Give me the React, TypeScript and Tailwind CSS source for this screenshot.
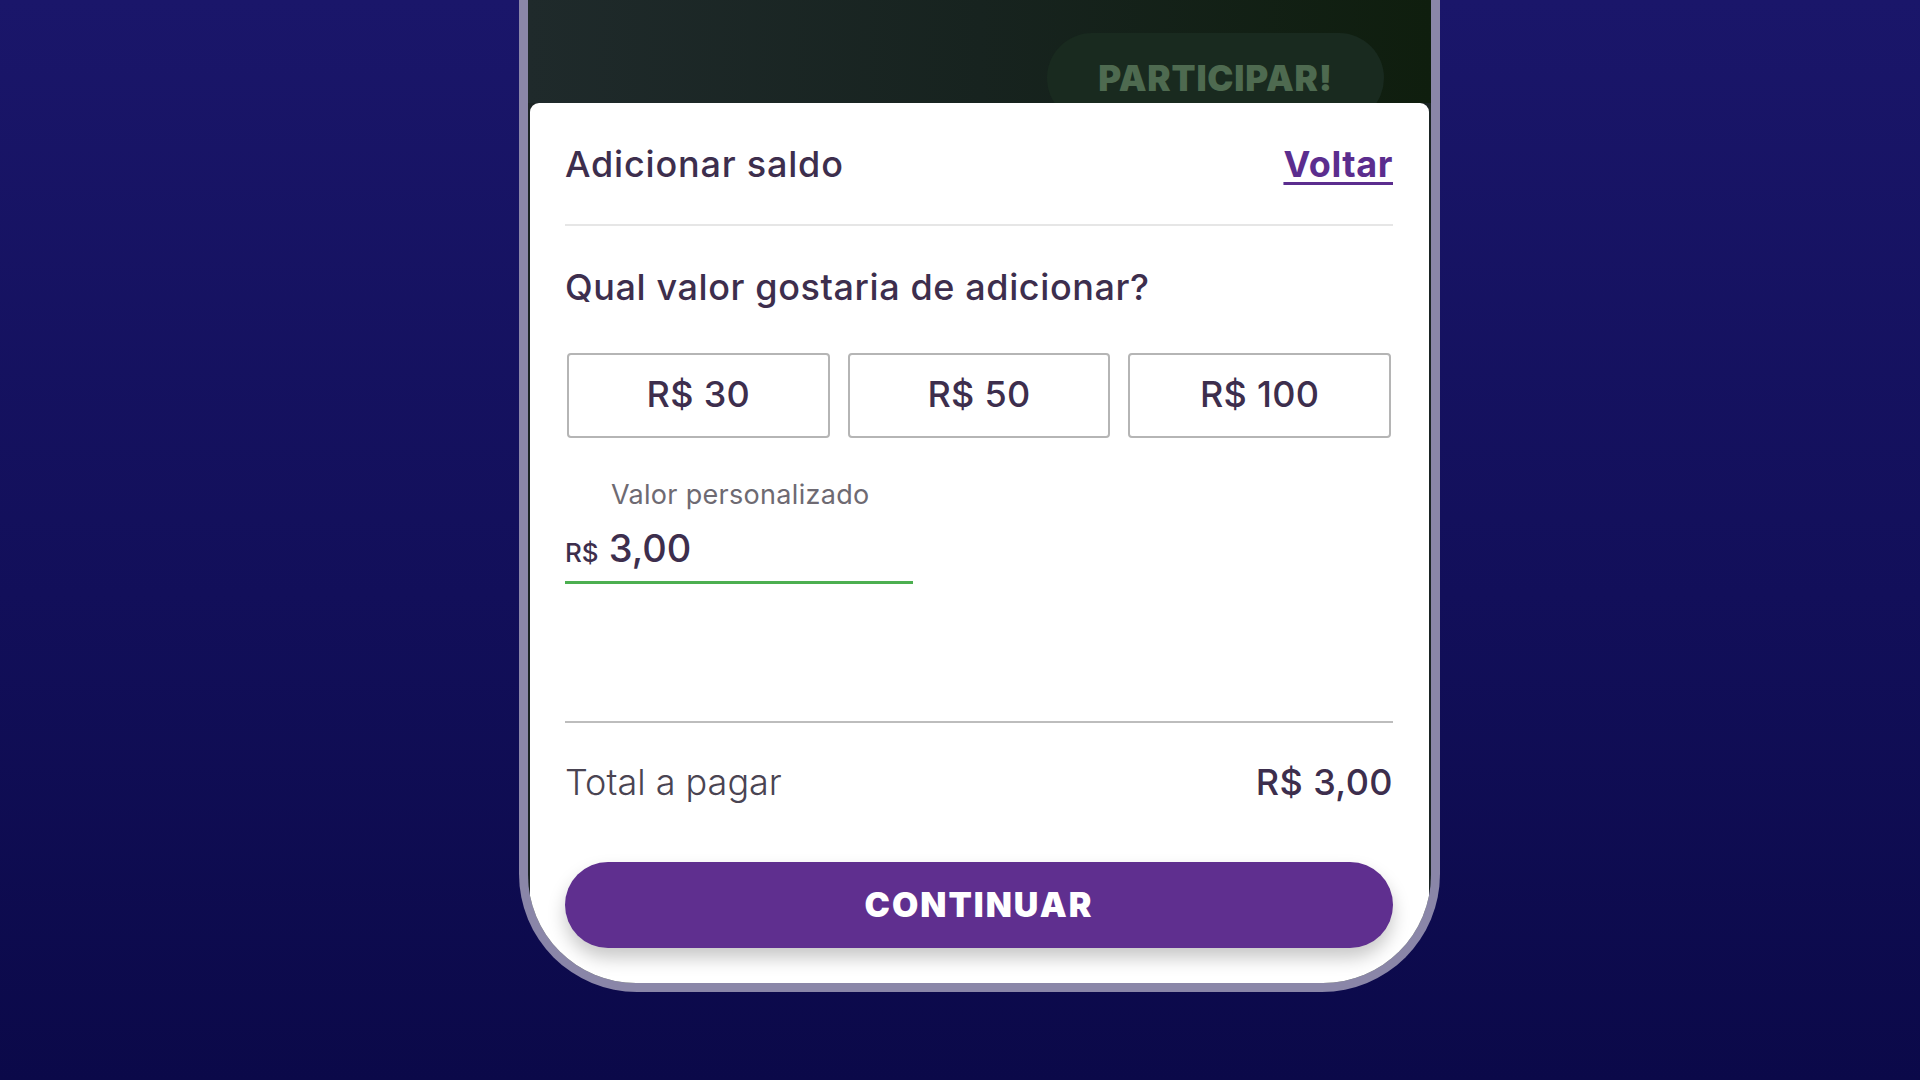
import React from "react";

export default function App() {
  const amounts = ["R$ 30", "R$ 50", "R$ 100"];
  return (
    <div
      className="w-[1920px] h-[1080px] overflow-hidden bg-[linear-gradient(180deg,#1a166a_0%,#120f5a_55%,#0b0949_100%)]"
      style={{ fontFamily: "Inter, 'Noto Sans', sans-serif" }}
    >
      <div className="ml-[519px] w-[921px] h-[992px] bg-[#8a86a8] rounded-b-[118px] px-[9px] pb-[9px]">
        <div className="h-full flex flex-col overflow-hidden rounded-b-[108px] bg-[#1b2424] px-[2px]">
          {/* top dark area */}
          <div className="h-[103px] shrink-0 overflow-hidden flex justify-end bg-[linear-gradient(90deg,#1f2a2b_0%,#17231f_50%,#0f1e0e_100%)] -mx-[2px]">
            <div className="mt-[33px] mr-[47px] w-[337px] h-[90px] shrink-0 rounded-full bg-[#192a1f] flex items-center justify-center">
              <span className="text-[35px] font-black tracking-[0.8px] text-[#4e6a50] leading-none">PARTICIPAR!</span>
            </div>
          </div>
          {/* sheet */}
          <div className="flex-1 bg-white rounded-t-[9px] pl-[35px] pr-[36px] flex flex-col">
            <div className="h-[121px] flex items-center justify-between">
              <span className="text-[36px] font-medium tracking-[0.8px] text-[#3d2e4d] leading-none">Adicionar saldo</span>
              <span className="text-[36px] font-bold tracking-[0.6px] text-[#5b2d8e] leading-none underline decoration-[3px] underline-offset-[5px]">Voltar</span>
            </div>
            <div className="h-[2px] bg-[#e6e6e6]" />
            <div className="mt-[41px] h-[40px] flex items-center">
              <span className="text-[36px] font-medium tracking-[0.6px] text-[#3d2e4d] leading-none">Qual valor gostaria de adicionar?</span>
            </div>
            <div className="mt-[46px] h-[85px] grid grid-cols-3 gap-[18px] px-[2px]">
              {amounts.map((a) => (
                <div
                  key={a}
                  className="border-2 border-[#b5b5b5] rounded-[4px] flex items-center justify-center pb-[4px]"
                >
                  <span className="text-[36px] font-medium tracking-[0.3px] text-[#3d2e4d] leading-none">{a}</span>
                </div>
              ))}
            </div>
            <div className="mt-[41px] h-[30px] flex items-center pl-[46px]">
              <span className="text-[27px] font-normal tracking-[0.3px] text-[#6e6a72] leading-none">Valor personalizado</span>
            </div>
            <div className="mt-[17px] h-[44px] flex items-center">
              <div className="flex items-baseline gap-[10px]">
                <span className="text-[26px] font-medium text-[#3d2e4d] leading-none">R$</span>
                <span className="text-[38px] font-medium text-[#3d2e4d] leading-none">3,00</span>
              </div>
            </div>
            <div className="mt-[11px] h-[3px] w-[348px] bg-[#4caf50]" />
            <div className="mt-[137px] h-[2px] bg-[#bdbdbd]" />
            <div className="mt-[39px] h-[40px] flex items-center justify-between">
              <span className="text-[36px] font-light text-[#4a4452] leading-none">Total a pagar</span>
              <span className="text-[36px] font-medium tracking-[0.4px] text-[#3d2e4d] leading-none">R$ 3,00</span>
            </div>
            <div className="mt-[60px] h-[86px] rounded-full bg-[#5f2f8f] flex items-center justify-center shadow-[0_10px_18px_rgba(0,0,0,0.22)]">
              <span className="text-[34px] font-black text-white leading-none tracking-[2px]">CONTINUAR</span>
            </div>
          </div>
        </div>
      </div>
    </div>
  );
}
